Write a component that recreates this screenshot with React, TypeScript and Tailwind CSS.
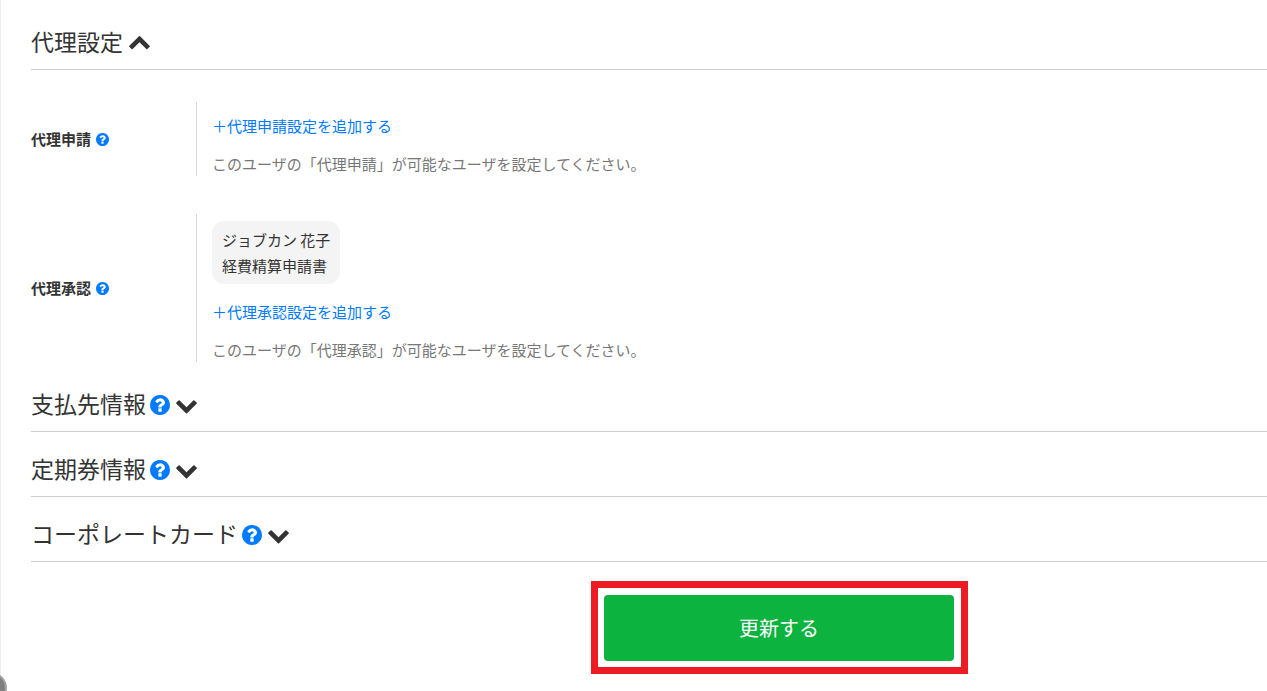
import { FC, ReactNode, useState } from "react";

interface IconProps {
  className?: string;
}

const HelpIcon: FC<IconProps> = ({ className }) => (
  <svg viewBox="128 128 1536 1536" fill="currentColor" className={className} aria-hidden="true">
    <path d="M1024 1376v-192q0-14-9-23t-23-9h-192q-14 0-23 9t-9 23v192q0 14 9 23t23 9h192q14 0 23-9t9-23zm256-672q0-88-55.5-163t-138.5-116-170-41q-243 0-371 213-15 24 8 42l132 100q7 6 19 6 16 0 25-12 53-68 86-92 34-24 86-24 48 0 85.5 26t37.5 59q0 38-20 61t-68 45q-63 28-115.5 86.5t-52.5 125.5v36q0 14 9 23t23 9h192q14 0 23-9t9-23q0-19 21.5-49.5t54.5-49.5q32-18 49-28.5t46-35 44.5-48 28-60.5 12.5-81zm384 192q0 209-103 385.5t-279.5 279.5-385.5 103-385.5-103-279.5-279.5-103-385.5 103-385.5 279.5-279.5 385.5-103 385.5 103 279.5 279.5 103 385.5z" />
  </svg>
);

const ChevronUpIcon: FC<IconProps> = ({ className }) => (
  <svg viewBox="0 176 1792 1792" fill="currentColor" className={className} aria-hidden="true">
    <path d="M1683 1331l-166 165q-19 19-45 19t-45-19l-531-531-531 531q-19 19-45 19t-45-19l-166-165q-19-19-19-45.5t19-45.5l742-741q19-19 45-19t45 19l742 741q19 19 19 45.5t-19 45.5z" />
  </svg>
);

const ChevronDownIcon: FC<IconProps> = ({ className }) => (
  <svg viewBox="0 48 1792 1792" fill="currentColor" className={className} aria-hidden="true">
    <path d="M1683 808l-742 741q-19 19-45 19t-45-19l-742-741q-19-19-19-45.5t19-45.5l166-165q19-19 45-19t45 19l531 531 531-531q19-19 45-19t45 19l166 165q19 19 19 45.5t-19 45.5z" />
  </svg>
);

interface SectionProps {
  title: string;
  hasHelp?: boolean;
  defaultOpen?: boolean;
  children?: ReactNode;
}

const Section: FC<SectionProps> = ({ title, hasHelp, defaultOpen = false, children }) => {
  const [isOpen, setIsOpen] = useState(defaultOpen);
  const Chevron = isOpen ? ChevronUpIcon : ChevronDownIcon;

  return (
    <section>
      <div className="flex items-center border-b border-[#cccccc] pt-[19px] pb-[7px]">
        <h2 className="pb-1 text-[23px] leading-[34px] font-normal">{title}</h2>
        {hasHelp && (
          <button type="button" aria-label={`${title}のヘルプ`} className="ml-1 text-[#007bff]">
            <HelpIcon className="size-5" />
          </button>
        )}
        <button
          type="button"
          aria-label={title}
          aria-expanded={isOpen}
          onClick={() => setIsOpen(!isOpen)}
          className="ml-[5px]"
        >
          <Chevron className="size-[23px]" />
        </button>
      </div>
      {isOpen && children}
    </section>
  );
};

interface SettingRowProps {
  label: string;
  linkText: string;
  description: string;
  children?: ReactNode;
}

const SettingRow: FC<SettingRowProps> = ({ label, linkText, description, children }) => (
  <div className="flex">
    <div className="flex w-[165px] shrink-0 items-center gap-[5px]">
      <h3 className="text-[15px] leading-6 font-bold">{label}</h3>
      <button type="button" aria-label={`${label}のヘルプ`} className="text-[#007bff]">
        <HelpIcon className="size-[13px]" />
      </button>
    </div>
    <div className="grow border-l border-[#d9d9d9] pl-[15px]">
      {children}
      <div className="pt-3">
        <a href="#" className="block w-fit text-[15px] leading-6 text-[#007bff]">
          {linkText}
        </a>
        <p className="mt-3.5 text-[15px] leading-6 text-[#777777]">{description}</p>
      </div>
    </div>
  </div>
);

const App: FC = () => {
  return (
    <div className="relative min-h-screen overflow-hidden border-l border-[#eeeeee] bg-white pt-[5px] pl-[30px] font-['Noto_Sans_CJK_JP',sans-serif] text-[#333333]">
      <Section title="代理設定" defaultOpen>
        <div className="flex flex-col gap-[38px] pt-8 pb-[5px]">
          <SettingRow
            label="代理申請"
            linkText="＋代理申請設定を追加する"
            description="このユーザの「代理申請」が可能なユーザを設定してください。"
          />
          <SettingRow
            label="代理承認"
            linkText="＋代理承認設定を追加する"
            description="このユーザの「代理承認」が可能なユーザを設定してください。"
          >
            <div className="pt-[7px] pb-1">
              <div className="w-fit rounded-xl bg-[#f4f4f4] px-2.5 pt-1.5 pb-[5px] text-[15px] leading-[26px]">
                <p>ジョブカン 花子</p>
                <p>経費精算申請書</p>
              </div>
            </div>
          </SettingRow>
        </div>
      </Section>
      <Section title="支払先情報" hasHelp />
      <Section title="定期券情報" hasHelp />
      <Section title="コーポレートカード" hasHelp />

      <div className="mt-[19px] flex justify-center pb-4 pl-[261px]">
        <div className="border-[7px] border-[#ed1c24] pt-[7px] pr-[7px] pb-1.5 pl-1.5">
          <button
            type="button"
            className="block h-[66px] w-[350px] rounded bg-[#0db33f] text-[20px] text-white"
          >
            更新する
          </button>
        </div>
      </div>

      <div className="fixed -bottom-[13px] -left-[25px] size-8 rounded-full border-2 border-[#a5a5a5] bg-[#808080]" />
    </div>
  );
};

export default App;
